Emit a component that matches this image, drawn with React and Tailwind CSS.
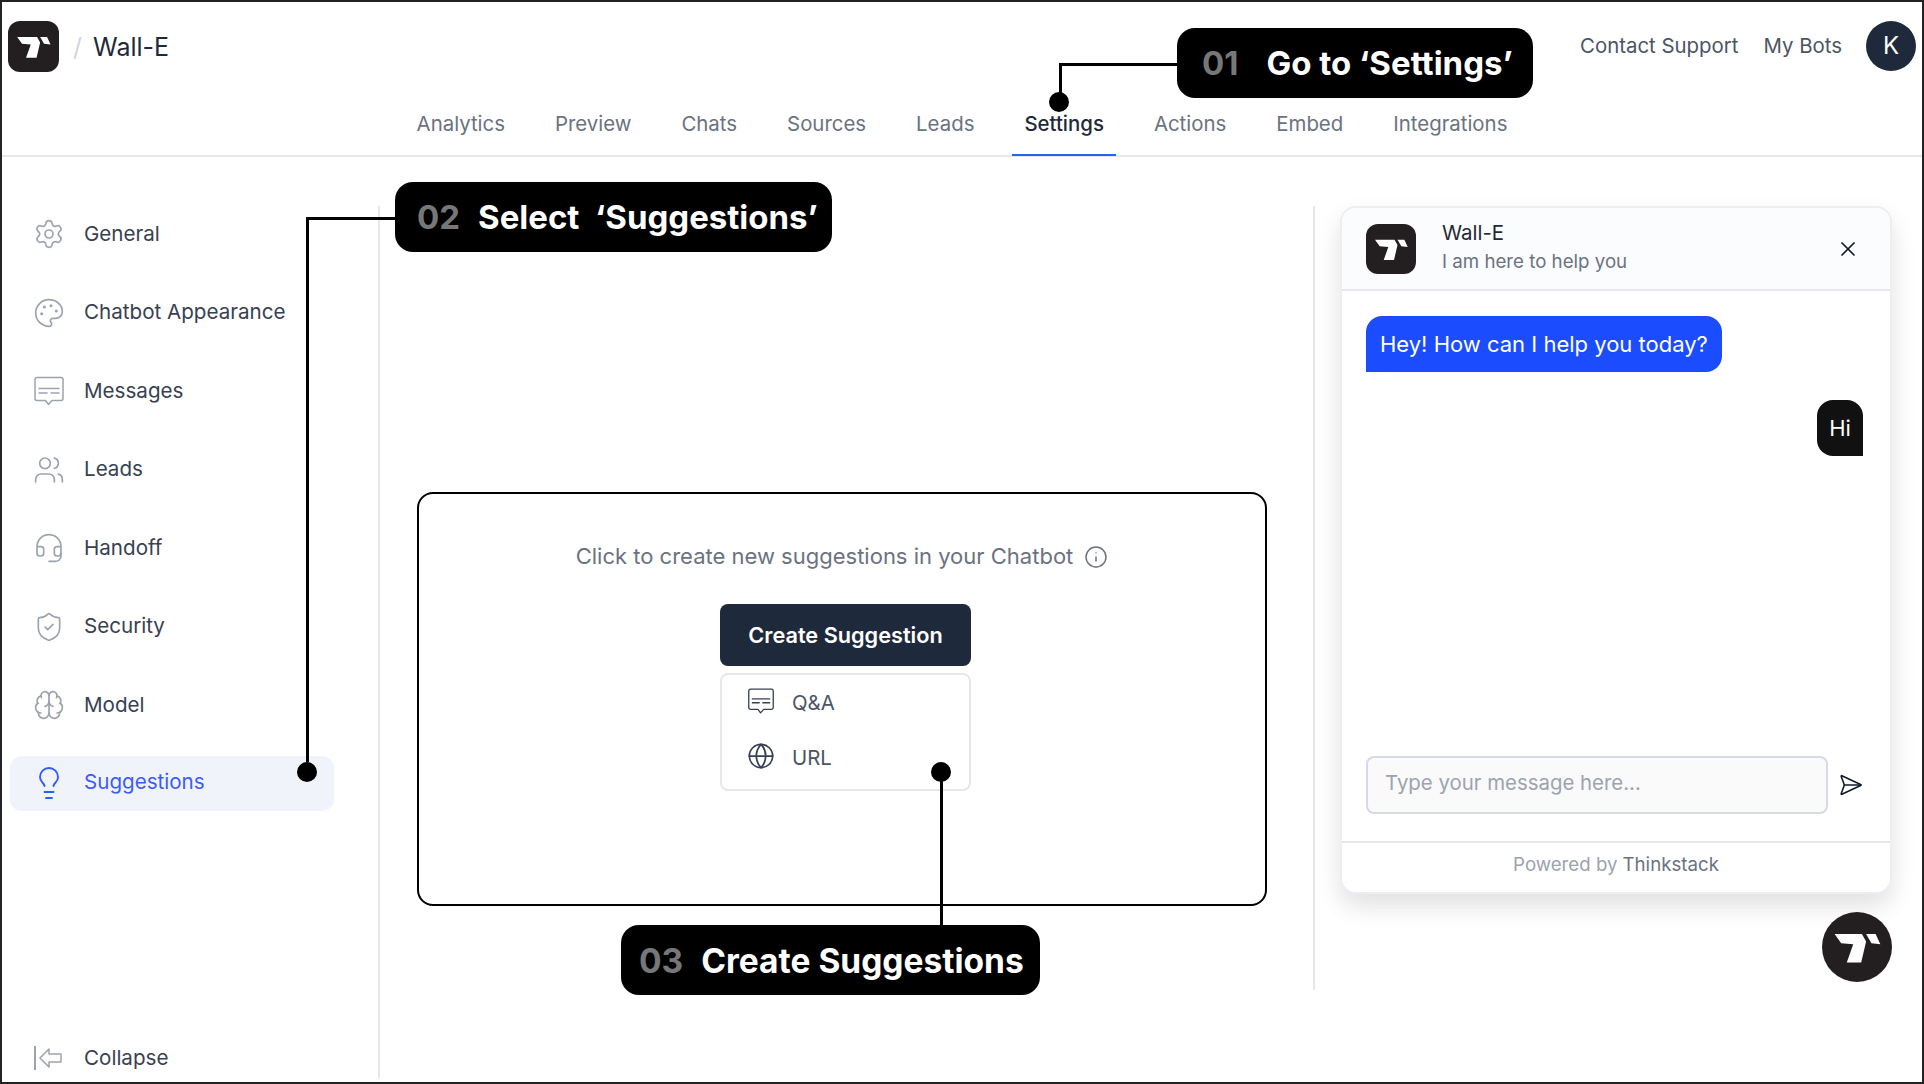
import {
  Settings,
  Palette,
  Users,
  Headset,
  ShieldCheck,
  Brain,
  Lightbulb,
  Globe,
  X,
  Info,
  SendHorizontal,
} from 'lucide-react'

const tabs = ['Analytics', 'Preview', 'Chats', 'Sources', 'Leads', 'Settings', 'Actions', 'Embed', 'Integrations']

const MessageIcon = ({ className }) => (
  <svg viewBox="0 0 32 32" fill="none" stroke="currentColor" strokeWidth="1.5" strokeLinejoin="round" className={className}>
    <path d="M4 2.5h24a2 2 0 0 1 2 2v19a2 2 0 0 1-2 2H19l-3.5 4-3-4H4a2 2 0 0 1-2-2v-19a2 2 0 0 1 2-2Z" />
    <path d="M5.5 13.5h21M5.5 18h9M17.5 18h9" />
  </svg>
)

const CollapseIcon = ({ className }) => (
  <svg viewBox="0 0 32 32" fill="none" stroke="currentColor" strokeWidth="1.5" strokeLinejoin="round" className={className}>
    <path d="M2 4v24" strokeWidth="2" />
    <path d="M7 16 16 7v5h12v8H16v5Z" />
  </svg>
)

const sideItems = [
  { label: 'General', Icon: Settings },
  { label: 'Chatbot Appearance', Icon: Palette },
  { label: 'Messages', Icon: MessageIcon },
  { label: 'Leads', Icon: Users },
  { label: 'Handoff', Icon: Headset },
  { label: 'Security', Icon: ShieldCheck },
  { label: 'Model', Icon: Brain },
  { label: 'Suggestions', Icon: Lightbulb, active: true },
]

const LogoMark = ({ className }) => (
  <svg viewBox="0 0 50 50" fill="#fff" className={className}>
    <path d="M9 15.7h19.5l3 5.3L28 36H17.7l4.6-13-8.6-.7Z" />
    <path d="M31.5 15.7h6.8l3.4 7.3-6.4-.7Z" />
  </svg>
)

const Dot = ({ className }) => (
  <div className={`absolute h-5 w-5 rounded-full bg-black ${className}`} />
)

const Callout = ({ number, label, className, gap }) => (
  <div className={`absolute flex h-[70px] items-center rounded-[18px] bg-black pt-[2px] font-bold text-white ${className}`}>
    <span className={`text-[#777777] ${gap}`}>{number}</span>
    <span className="whitespace-pre">{label}</span>
  </div>
)

const App = () => {
  return (
    <div className="relative flex h-screen w-screen flex-col overflow-hidden border-2 border-[#222222] bg-white font-[Inter,sans-serif]">
      {/* Top bar */}
      <header className="h-[155px] shrink-0 border-b-2 border-[#e5e7eb]">
        <div className="mt-[19px] flex h-[50px] items-center justify-between pl-[6px] pr-[6px]">
          <div className="flex items-center">
            <div className="h-[51px] w-[51px] rounded-xl bg-[#231f20]">
              <LogoMark className="h-full w-full" />
            </div>
            <span className="ml-[14px] pt-[3px] text-[25px] text-[#d1d5db]">/</span>
            <span className="ml-[11px] pt-[3px] text-[25px] text-[#1f2937]">Wall-E</span>
          </div>
          <div className="flex items-center text-[20.4px] text-[#4b5563]">
            <span>Contact Support</span>
            <span className="ml-[25px]">My Bots</span>
            <div className="ml-6 flex h-[50px] w-[50px] items-center justify-center rounded-full bg-[#1e293b] text-2xl text-white">K</div>
          </div>
        </div>
        <nav className="mt-[19px] flex h-[66px] justify-center gap-[26px]">
          {tabs.map((tab) => (
            <div
              key={tab}
              className={`flex items-center border-b-2 px-3 pt-[4px] text-[20.4px] ${
                tab === 'Settings' ? 'border-[#2563eb] font-medium text-[#1f2937]' : 'border-transparent text-[#6b7280]'
              }`}
            >
              {tab}
            </div>
          ))}
        </nav>
      </header>

      <div className="flex min-h-0 flex-1">
        {/* Sidebar */}
        <aside className="mb-1 mt-[49px] flex w-[378px] shrink-0 flex-col border-r-2 border-[#e5e7eb] pl-2 pr-[44px]">
          <div className="flex flex-col gap-[23.5px]">
            {sideItems.map(({ label, Icon, active }) => (
              <div
                key={label}
                className={`flex h-[55px] items-center rounded-xl pl-[23px] text-[20.6px] ${
                  active ? 'bg-[#f0f4fa] pb-[1px] text-[#3b5bfd]' : 'pt-[1px] text-[#374151]'
                }`}
              >
                <Icon
                  className={active ? 'h-9 w-9 -ml-[2px] mr-[17px] text-[#2f5bff]' : 'h-8 w-8 mr-[19px] text-[#9ca3af]'}
                  strokeWidth={1.25}
                />
                <span>{label}</span>
              </div>
            ))}
          </div>
          <div className="mt-auto flex h-10 items-center gap-[19px] pl-[23px] text-[20.6px] text-[#374151]">
            <CollapseIcon className="h-8 w-8 text-[#9ca3af]" />
            <span>Collapse</span>
          </div>
        </aside>

        {/* Suggestions */}
        <main className="flex-1 pl-[37px] pt-[335px]">
          <div className="flex h-[414px] w-[850px] flex-col items-center rounded-2xl border-2 border-black pt-[46px]">
            <div className="flex items-center text-[22px] text-[#6b7280]">
              <span>Click to create new suggestions in your Chatbot</span>
              <Info className="ml-[11px] h-6 w-6 text-[#6b7280]" strokeWidth={1.5} />
            </div>
            <button className="ml-[7px] mt-[31px] h-[62px] w-[251px] rounded-lg bg-[#1e293b] text-[21.7px] font-semibold text-white">
              Create Suggestion
            </button>
            <div className="ml-[7px] mt-[7px] flex h-[118px] w-[251px] flex-col rounded-lg border-2 border-[#e5e7eb] pl-[25px] pt-[1px] text-[20.4px] text-[#4b5563]">
              <div className="flex h-[55px] items-center gap-[17px]">
                <MessageIcon className="mb-[6px] h-7 w-7 text-[#374151]" />
                <span>Q&amp;A</span>
              </div>
              <div className="flex h-[55px] items-center gap-[17px]">
                <Globe className="mb-[6px] h-7 w-7 text-[#374151]" strokeWidth={1.5} />
                <span>URL</span>
              </div>
            </div>
          </div>
        </main>

        {/* Chat preview */}
        <section className="mt-[49px] flex h-[784px] w-[609px] shrink-0 flex-col border-l-2 border-[#e5e7eb] pl-[25px]">
          <div className="flex h-[688px] w-[552px] flex-col overflow-hidden rounded-2xl border-2 border-[#eceef2] bg-white shadow-[0_12px_24px_rgba(0,0,0,0.12)]">
            <div className="flex h-[83px] shrink-0 items-center border-b-2 border-[#e5e7eb] bg-[#fbfcfe] pl-[24px] pr-[30px]">
              <div className="h-[50px] w-[50px] rounded-xl bg-[#231f20]">
                <LogoMark className="h-full w-full" />
              </div>
              <div className="ml-[26px] flex-1">
                <div className="-mt-[2px] text-[20.4px] leading-7 text-[#1f2937]">Wall-E</div>
                <div className="mt-[1px] text-[18.7px] leading-7 text-[#6b7280]">I am here to help you</div>
              </div>
              <X className="h-6 w-6 text-[#111827]" strokeWidth={1.75} />
            </div>
            <div className="flex flex-1 flex-col pl-[24px] pr-[27px] pt-[25px]">
              <div className="flex h-14 w-fit items-center rounded-2xl rounded-bl-none bg-[#1b4dff] px-[14px] text-[22px] text-white">
                Hey! How can I help you today?
              </div>
              <div className="mt-7 flex h-14 w-[46px] items-center justify-center self-end rounded-2xl rounded-br-none bg-[#111111] text-[22px] text-white">
                Hi
              </div>
              <div className="mb-[27px] mt-auto flex items-center">
                <div className="flex h-[58px] w-[462px] shrink-0 items-center rounded-lg border-2 border-[#d7dae2] bg-[#fafafa] pb-1 pl-[17px] text-[20.4px] text-[#9ca3af]">
                  Type your message here...
                </div>
                <SendHorizontal className="ml-[10px] h-7 w-7 text-[#111827]" strokeWidth={1.5} />
              </div>
            </div>
            <div className="flex h-[51px] shrink-0 items-center justify-center border-t-2 border-[#e5e7eb] pb-[5px] text-[18.7px] text-[#9ca3af]">
              Powered by<span className="ml-[5px] text-[#6b7280]">Thinkstack</span>
            </div>
          </div>
          <div className="mt-[18px] flex w-[552px] justify-end">
            <div className="h-[70px] w-[70px] rounded-full bg-[#231f20]">
              <LogoMark className="h-full w-full" />
            </div>
          </div>
        </section>
      </div>

      {/* Walkthrough annotations */}
      <Callout number="01" label="Go to ‘Settings’" className="left-[1175px] top-[26px] w-[356px] pl-[25px] text-[33px]" gap="mr-[28px]" />
      <Callout number="02" label="Select  ‘Suggestions’" className="left-[393px] top-[180px] w-[437px] pl-[22px] text-[33px]" gap="mr-[18px]" />
      <Callout number="03" label="Create Suggestions" className="left-[619px] top-[923px] w-[419px] pl-[18px] text-[33.5px]" gap="mr-[18px]" />

      <div className="absolute left-[1057px] top-[61px] h-[3px] w-[120px] bg-black" />
      <div className="absolute left-[1057px] top-[61px] h-[32px] w-[3px] bg-black" />
      <Dot className="left-[1047px] top-[90px]" />

      <div className="absolute left-[304px] top-[215px] h-[3px] w-[90px] bg-black" />
      <div className="absolute left-[304px] top-[215px] h-[545px] w-[3px] bg-black" />
      <Dot className="left-[295px] top-[760px]" />

      <div className="absolute left-[938px] top-[770px] h-[155px] w-[3px] bg-black" />
      <Dot className="left-[929px] top-[760px]" />
    </div>
  )
}

export default App
